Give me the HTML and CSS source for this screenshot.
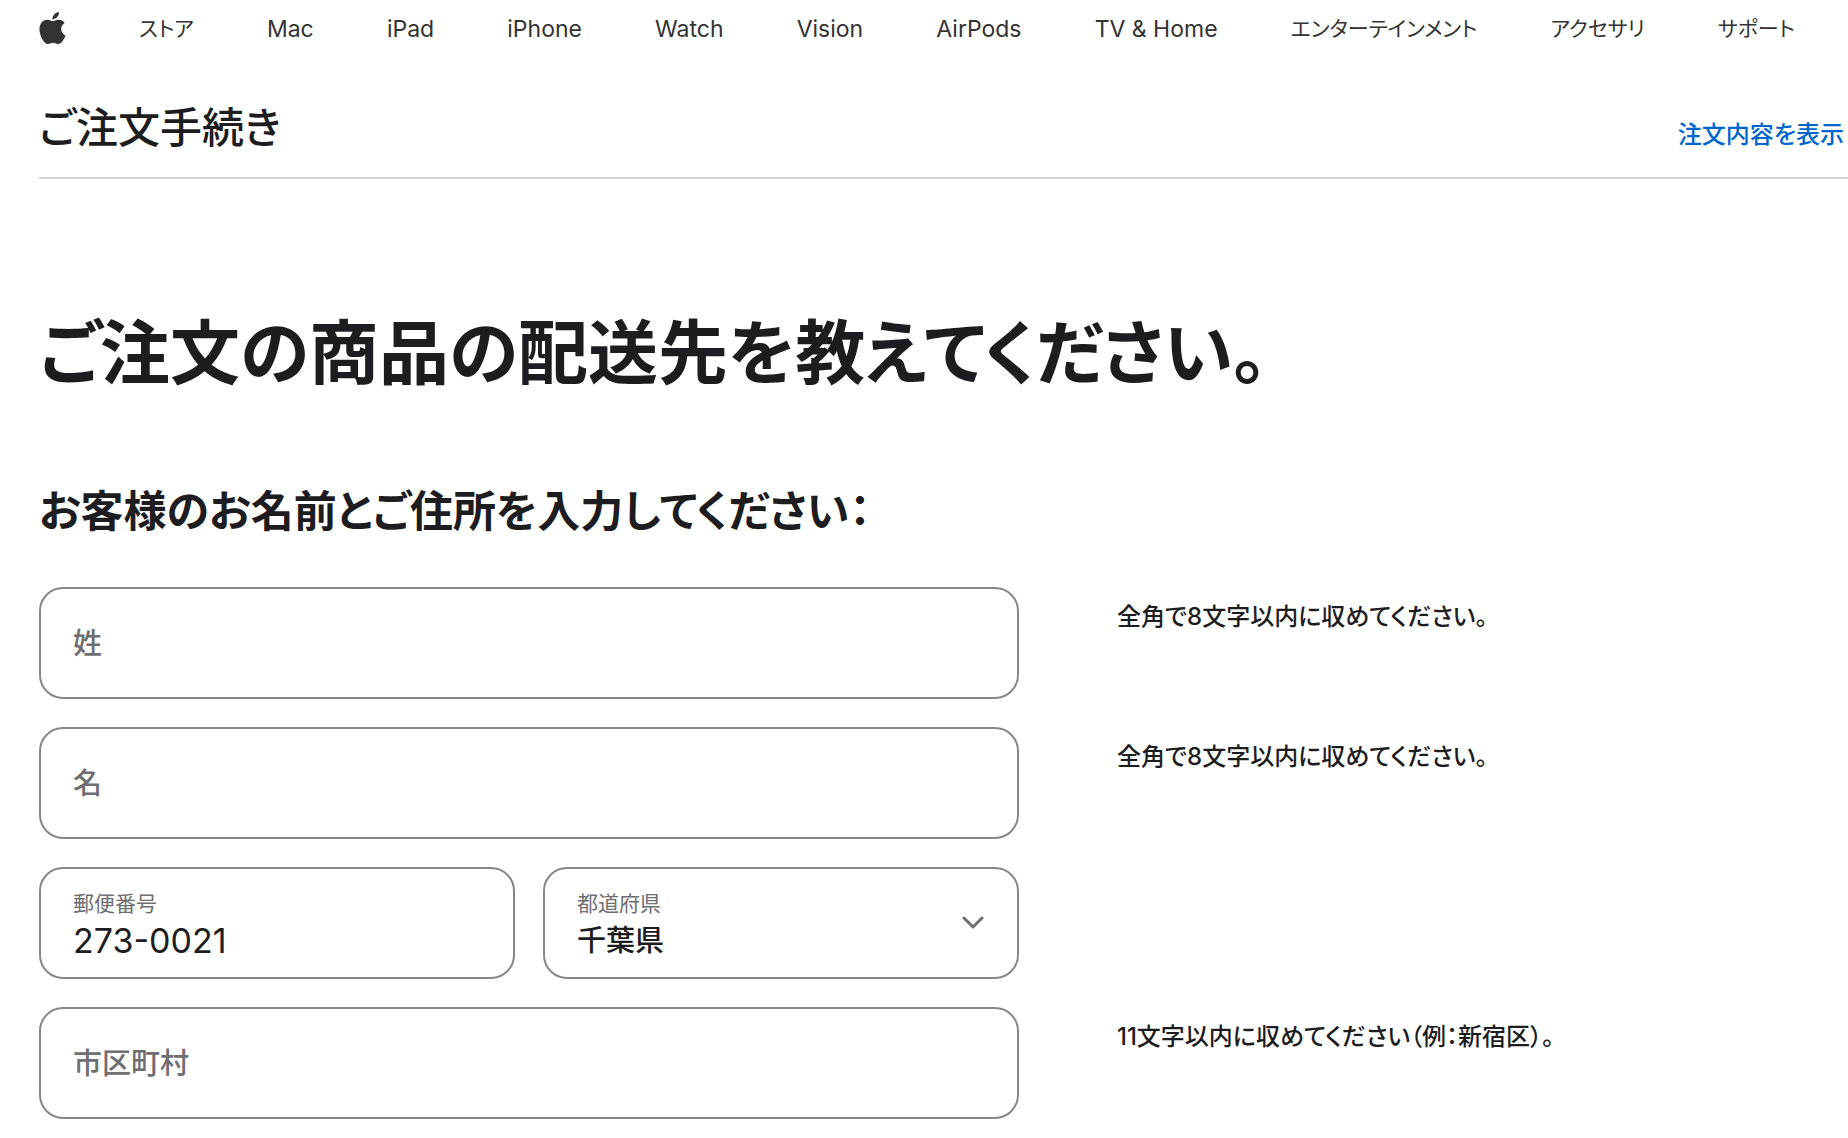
FILE: index.html
```html
<!DOCTYPE html>
<html lang="ja">
<head>
  <meta charset="UTF-8">
  <meta name="viewport" content="width=device-width, initial-scale=1">
  <title>ご注文手続き</title>
  <link rel="stylesheet" href="styles.css">
</head>
<body>
  <nav class="globalnav" aria-label="グローバル">
    <a class="logo" href="#" aria-label="Apple">
      <svg viewBox="2 0 20 24" width="27" height="32" aria-hidden="true">
        <path d="M12.152 6.896c-.948 0-2.415-1.078-3.96-1.04-2.04.027-3.91 1.183-4.961 3.014-2.117 3.675-.546 9.103 1.519 12.09 1.013 1.454 2.208 3.09 3.792 3.039 1.52-.065 2.09-.987 3.935-.987 1.831 0 2.35.987 3.96.948 1.637-.026 2.676-1.48 3.676-2.948 1.156-1.688 1.636-3.325 1.662-3.415-.039-.013-3.182-1.221-3.22-4.857-.026-3.04 2.48-4.494 2.597-4.559-1.429-2.09-3.623-2.324-4.39-2.376-2-.156-3.675 1.09-4.61 1.09zM15.53 3.83c.843-1.012 1.4-2.427 1.245-3.83-1.207.052-2.662.805-3.532 1.818-.78.896-1.454 2.338-1.273 3.714 1.338.104 2.715-.688 3.559-1.701"/>
      </svg>
    </a>
    <a class="kana" href="#">ストア</a>
    <a href="#">Mac</a>
    <a href="#">iPad</a>
    <a href="#">iPhone</a>
    <a href="#">Watch</a>
    <a href="#">Vision</a>
    <a href="#">AirPods</a>
    <a href="#">TV &amp; Home</a>
    <a class="kana" href="#">エンターテインメント</a>
    <a class="kana" href="#">アクセサリ</a>
    <a class="kana" href="#">サポート</a>
  </nav>

  <div class="page">
    <header class="localnav">
      <div class="localnav-title">ご注文手続き</div>
      <a class="summary-link" href="#">注文内容を表示</a>
    </header>

    <main>
      <h1>ご注文の商品の配送先を教えてください。</h1>
      <h2>お客様のお名前とご住所を入力してください：</h2>

      <form class="address-form">
        <div class="form-row">
          <div class="field">
            <input type="text" id="lastName">
            <label for="lastName">姓</label>
          </div>
          <p class="hint">全角で8文字以内に収めてください。</p>
        </div>

        <div class="form-row">
          <div class="field">
            <input type="text" id="firstName">
            <label for="firstName">名</label>
          </div>
          <p class="hint">全角で8文字以内に収めてください。</p>
        </div>

        <div class="form-row">
          <div class="field-pair">
            <div class="field filled">
              <input type="text" id="postalCode" value="273-0021">
              <label for="postalCode">郵便番号</label>
            </div>
            <div class="field filled">
              <select id="state">
                <option>東京都</option>
                <option selected>千葉県</option>
                <option>神奈川県</option>
              </select>
              <label for="state">都道府県</label>
              <svg class="chevron" viewBox="0 0 22 14" width="22" height="14" aria-hidden="true">
                <path d="M2 2l9 9 9-9"/>
              </svg>
            </div>
          </div>
        </div>

        <div class="form-row">
          <div class="field">
            <input type="text" id="city">
            <label for="city">市区町村</label>
          </div>
          <p class="hint">11文字以内に収めてください（例：新宿区）。</p>
        </div>
      </form>
    </main>
  </div>
</body>
</html>
```
FILE: styles.css
```css
* {
  box-sizing: border-box;
}

body {
  margin: 0;
  font-family: Inter, "Noto Sans CJK JP", sans-serif;
  font-feature-settings: "palt";
  color: #1d1d1f;
  background-color: #fff;
}

a {
  text-decoration: none;
}

.globalnav {
  display: flex;
  justify-content: space-between;
  align-items: center;
  height: 58px;
  padding: 0 53px 0 39px;
}

.globalnav a {
  color: #333;
  font-size: 23px;
  line-height: 32px;
  white-space: nowrap;
}

.globalnav .kana {
  font-size: 21px;
}

.globalnav .logo {
  height: 34px;
}

.logo svg {
  display: block;
  fill: #333;
}

.page {
  padding-left: 39px;
}

.localnav {
  display: flex;
  justify-content: space-between;
  align-items: baseline;
  height: 121px;
  padding: 40px 4px 0 0;
  border-bottom: 2px solid #d2d2d7;
}

.localnav-title {
  font-size: 42px;
  font-weight: 500;
  line-height: 60px;
}

.summary-link {
  color: #06c;
  font-size: 24px;
  font-weight: 500;
}

h1 {
  margin: 125px 0 0;
  font-size: 70px;
  line-height: 100px;
}

h2 {
  margin: 77px 0 46px;
  font-size: 43px;
  line-height: 60px;
}

.form-row {
  display: grid;
  grid-template-columns: 63fr 47fr;
  gap: 98px;
  margin-bottom: 28px;
}

.field-pair {
  display: grid;
  grid-template-columns: 1fr 1fr;
  gap: 28px;
}

.field {
  position: relative;
}

.field input,
.field select {
  display: block;
  width: 100%;
  height: 112px;
  margin: 0;
  padding: 34px 32px 0;
  border: 2px solid #86868b;
  border-radius: 24px;
  background-color: #fff;
  color: #1d1d1f;
  font-family: inherit;
  font-size: 34px;
  appearance: none;
}

.field select {
  font-size: 29px;
  font-weight: 500;
}

/* floating label, sits over the control */
.field label {
  position: absolute;
  top: 35px;
  left: 34px;
  color: #6e6e73;
  font-size: 29px;
  font-weight: 500;
  line-height: 44px;
  pointer-events: none;
}

.field.filled label {
  top: 21px;
  font-size: 21px;
  font-weight: 400;
  line-height: 32px;
}

.chevron {
  position: absolute;
  top: 49px;
  right: 35px;
  fill: none;
  stroke: #6e6e73;
  stroke-width: 3;
  stroke-linecap: round;
  stroke-linejoin: round;
  pointer-events: none;
}

.hint {
  margin: 13px 0 0;
  font-size: 24px;
  font-weight: 500;
  line-height: 34px;
}
```
